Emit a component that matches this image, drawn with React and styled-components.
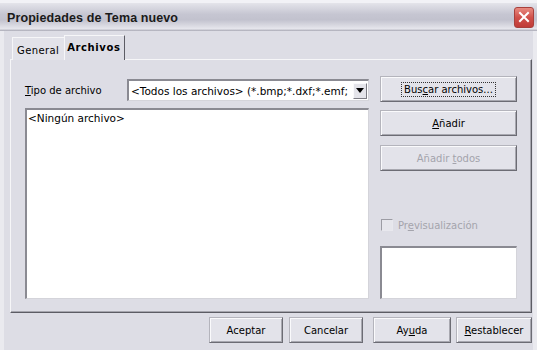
import React from 'react';
import styled, { createGlobalStyle, css } from 'styled-components';

const Global = createGlobalStyle`
  html, body { margin: 0; padding: 0; background: #ffffff; }
  body { font-family: "DejaVu Sans", "Liberation Sans", sans-serif; font-size: 10px; color: #000; }
  * { box-sizing: border-box; }
`;

const Window = styled.div`
  width: 537px;
  height: 350px;
  display: flex;
  flex-direction: column;
  background: #dddde5;
`;

const TitleBar = styled.div`
  height: 31px;
  border-top: 3px solid #f2f2f6;
  display: flex;
  align-items: center;
  justify-content: space-between;
  padding: 0 3px 0 7px;
  background: linear-gradient(#e4e4ea 0%, #c6c6d2 40%, #c2c2ce 60%, #e6e6ec 92%, #a8a8b4 100%);
`;

const Title = styled.div`
  font-family: "Liberation Sans", sans-serif;
  font-weight: bold;
  font-size: 12.5px;
  letter-spacing: 0.1px;
  color: #1a1a1a;
  padding-top: 1px;
`;

const CloseBtn = styled.div`
  width: 20px;
  height: 21px;
  border: 1px solid #a8403c;
  border-radius: 3px;
  background: linear-gradient(#e88a80, #d0504a 50%, #c03c38);
  display: flex;
  align-items: center;
  justify-content: center;
`;

const Body = styled.div`
  flex: 1;
  display: flex;
  flex-direction: column;
  border-left: 4px solid #eaeaef;
  border-right: 4px solid #eaeaef;
  padding: 4px 1px 7px 6px;
`;

const TabRow = styled.div`
  display: flex;
  align-items: flex-end;
  height: 25px;
  padding-left: 2px;
  margin-bottom: -1px;
  position: relative;
  z-index: 1;
`;

const Tab = styled.div`
  display: flex;
  align-items: center;
  background: #dddde5;
  border-top: 1px solid #f6f6f8;
  border-left: 1px solid #f6f6f8;
  ${p => p.$active ? css`
    height: 25px;
    padding: 0 3px 2px 2px;
    font-weight: bold;
    letter-spacing: 0.6px;
    border-right: 1px solid #5c5c64;
  ` : css`
    height: 23px;
    padding: 2px 5px 0 4px;
    letter-spacing: 0.4px;
    background: #e2e2e9;
  `}
`;

const Panel = styled.div`
  height: 254px;
  border-top: 1px solid #f6f6f8;
  border-left: 1px solid #f6f6f8;
  border-right: 1px solid #5c5c64;
  border-bottom: 1px solid #5c5c64;
  box-shadow: inset -1px -1px 0 #a6a6ae;
  padding: 16px 14px 13px 14px;
  display: grid;
  grid-template-columns: 344px 137px;
  column-gap: 11px;
`;

const LeftCol = styled.div`
  display: flex;
  flex-direction: column;
`;

const FieldRow = styled.div`
  display: flex;
  align-items: center;
  height: 22px;
  margin-top: 3px;
`;

const Label = styled.div`
  width: 102px;
`;

const sunken = css`
  background: #ffffff;
  border-style: solid;
  border-width: 2px 1px 1px 2px;
  border-color: #8a8a92 #d4d4da #d4d4da #8a8a92;
`;

const Select = styled.div`
  ${sunken}
  width: 242px;
  height: 22px;
  display: flex;
  align-items: center;
  padding: 0 1px 0 2px;
`;

const SelectText = styled.div`
  flex: 1;
  overflow: hidden;
  white-space: nowrap;
  font-size: 10.5px;
`;

const ArrowBtn = styled.div`
  width: 14px;
  height: 16px;
  background: #e4e4ea;
  border-style: solid;
  border-width: 1px;
  border-color: #fafafc #7c7c84 #7c7c84 #fafafc;
  display: flex;
  align-items: center;
  justify-content: center;
`;

const ListBox = styled.div`
  ${sunken}
  flex: 1;
  margin-top: 7px;
  padding: 2px 1px;
  font-size: 10.5px;
`;

const RightCol = styled.div`
  display: flex;
  flex-direction: column;
`;

const Button = styled.div`
  height: 26px;
  width: ${p => p.$w || 137}px;
  flex: none;
  display: flex;
  align-items: center;
  justify-content: center;
  background: #e3e3ea;
  border-style: solid;
  border-width: 1px;
  border-color: #b4b4bc #6c6c74 #6c6c74 #b4b4bc;
  box-shadow: inset 1px 1px 0 #fafafc, inset -1px -1px 0 #a8a8b0;
  color: ${p => p.$disabled ? '#a4a4ac' : '#000'};
  margin-top: ${p => p.$mt || 0}px;
  margin-left: ${p => p.$ml || 0}px;
`;

const Focus = styled.span`
  outline: 1px dotted #333;
  outline-offset: 1px;
  padding: 0 1px;
`;

const U = styled.span`
  text-decoration: underline;
`;

const CheckRow = styled.div`
  margin-top: auto;
  height: 14px;
  display: flex;
  align-items: center;
  color: #a4a4ac;
  padding-left: 1px;
`;

const Check = styled.div`
  width: 12px;
  height: 12px;
  border-style: solid;
  border-width: 1px;
  border-color: #9c9ca4 #e8e8ee #e8e8ee #9c9ca4;
  background: #e6e6ec;
  margin-right: 5px;
`;

const Preview = styled.div`
  ${sunken}
  height: 53px;
  margin-top: 14px;
`;

const Footer = styled.div`
  display: flex;
  justify-content: flex-end;
  margin-top: 4px;
`;

export default function App() {
  return (
    <>
      <Global />
      <Window>
        <TitleBar>
          <Title>Propiedades de Tema nuevo</Title>
          <CloseBtn>
            <svg width="12" height="12" viewBox="0 0 12 12">
              <path d="M2 2 L10 10 M10 2 L2 10" stroke="#fff" strokeWidth="2" strokeLinecap="square" />
            </svg>
          </CloseBtn>
        </TitleBar>
        <Body>
          <TabRow>
            <Tab>General</Tab>
            <Tab $active>Archivos</Tab>
          </TabRow>
          <Panel>
            <LeftCol>
              <FieldRow>
                <Label><U>T</U>ipo de archivo</Label>
                <Select>
                  <SelectText>&lt;Todos los archivos&gt; (*.bmp;*.dxf;*.emf;</SelectText>
                  <ArrowBtn>
                    <svg width="8" height="5" viewBox="0 0 8 5">
                      <path d="M0 0 H8 L4 5 Z" fill="#000" />
                    </svg>
                  </ArrowBtn>
                </Select>
              </FieldRow>
              <ListBox>&lt;Ningún archivo&gt;</ListBox>
            </LeftCol>
            <RightCol>
              <Button><Focus>Bus<U>c</U>ar archivos...</Focus></Button>
              <Button $mt={8}><span><U>A</U>ñadir</span></Button>
              <Button $mt={9} $disabled><span>Añadir <U>t</U>odos</span></Button>
              <CheckRow>
                <Check />
                <span>Pr<U>e</U>visualización</span>
              </CheckRow>
              <Preview />
            </RightCol>
          </Panel>
          <Footer>
            <Button $w={74}>Aceptar</Button>
            <Button $w={74} $ml={6}>Cancelar</Button>
            <Button $w={78} $ml={10}><span>Ay<U>u</U>da</span></Button>
            <Button $w={76} $ml={5}><span><U>R</U>establecer</span></Button>
          </Footer>
        </Body>
      </Window>
    </>
  );
}
